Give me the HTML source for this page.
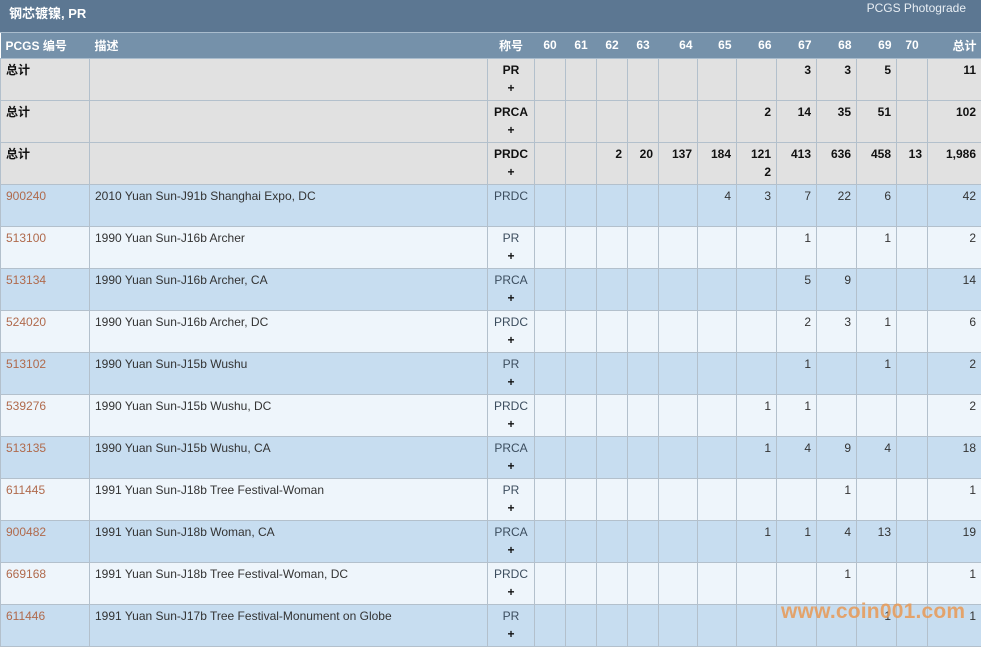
<!DOCTYPE html>
<html><head><meta charset="utf-8"><style>
*{margin:0;padding:0;box-sizing:border-box}
body{width:981px;height:640px;overflow:hidden;background:#fff;font-family:"Liberation Sans","Noto Sans CJK SC",sans-serif;font-size:12px;color:#333;position:relative}
.top{height:33px;background:#5c7792;position:relative;border-bottom:1px solid #a9bccd}
.top .t{position:absolute;left:9px;top:3px;color:#fff;font-weight:bold;font-size:13px}
.top .r{position:absolute;right:15px;top:1px;color:#e8eef4;font-size:12px}
table{border-collapse:collapse;table-layout:fixed;width:981px}
th{background:#7591aa;color:#fff;font-weight:bold;height:25px;font-size:12px;text-align:right;padding:0 5px 0 0;border-bottom:1px solid #a9bccd}
th.l{text-align:left;padding-left:5px}
th.c{text-align:center;padding:0}
td{height:42px;border:1px solid #b3c0cc;border-top:none;vertical-align:top;text-align:right;padding:2px 5px 0 0;line-height:18px}
td.l{text-align:left;padding-left:5px}
td.c{text-align:center;padding-right:0}
tr.s td{background:#e1e1e1;font-weight:bold;color:#111}
tr.b td{background:#c7ddf0}
tr.w td{background:#eef5fb}
td a{color:#b06a4c;text-decoration:none}
td.c{color:#3c4d5e}
tr.s td.c{color:#111}
b.p{color:#111}
.wm{position:absolute;left:781px;top:600px;color:#e89a55;font-weight:bold;font-size:21px;opacity:.85;font-family:"Liberation Sans",sans-serif;letter-spacing:0.2px}
</style></head><body>
<div class="top"><span class="t">钢芯镀镍, PR</span><span class="r">PCGS Photograde</span></div>
<table>
<colgroup><col style="width:89px"><col style="width:398px"><col style="width:47px"><col style="width:31px"><col style="width:31px"><col style="width:31px"><col style="width:31px"><col style="width:39px"><col style="width:39px"><col style="width:40px"><col style="width:40px"><col style="width:40px"><col style="width:40px"><col style="width:31px"><col style="width:54px"></colgroup>
<tr><th class="l">PCGS 编号</th><th class="l">描述</th><th class="c">称号</th><th class="c">60</th><th class="c">61</th><th class="c">62</th><th class="c">63</th><th>64</th><th>65</th><th>66</th><th>67</th><th>68</th><th>69</th><th class="c">70</th><th>总计</th></tr>
<tr class="s"><td class="l">总计</td><td></td><td class="c">PR<br>+</td><td></td><td></td><td></td><td></td><td></td><td></td><td></td><td>3</td><td>3</td><td>5</td><td></td><td>11</td></tr>
<tr class="s"><td class="l">总计</td><td></td><td class="c">PRCA<br>+</td><td></td><td></td><td></td><td></td><td></td><td></td><td>2</td><td>14</td><td>35</td><td>51</td><td></td><td>102</td></tr>
<tr class="s"><td class="l">总计</td><td></td><td class="c">PRDC<br>+</td><td></td><td></td><td>2</td><td>20</td><td>137</td><td>184</td><td>121<br>2</td><td>413</td><td>636</td><td>458</td><td>13</td><td>1,986</td></tr>
<tr class="b"><td class="l"><a>900240</a></td><td class="l">2010 Yuan Sun-J91b Shanghai Expo, DC</td><td class="c">PRDC</td><td></td><td></td><td></td><td></td><td></td><td>4</td><td>3</td><td>7</td><td>22</td><td>6</td><td></td><td>42</td></tr>
<tr class="w"><td class="l"><a>513100</a></td><td class="l">1990 Yuan Sun-J16b Archer</td><td class="c">PR<br><b class="p">+</b></td><td></td><td></td><td></td><td></td><td></td><td></td><td></td><td>1</td><td></td><td>1</td><td></td><td>2</td></tr>
<tr class="b"><td class="l"><a>513134</a></td><td class="l">1990 Yuan Sun-J16b Archer, CA</td><td class="c">PRCA<br><b class="p">+</b></td><td></td><td></td><td></td><td></td><td></td><td></td><td></td><td>5</td><td>9</td><td></td><td></td><td>14</td></tr>
<tr class="w"><td class="l"><a>524020</a></td><td class="l">1990 Yuan Sun-J16b Archer, DC</td><td class="c">PRDC<br><b class="p">+</b></td><td></td><td></td><td></td><td></td><td></td><td></td><td></td><td>2</td><td>3</td><td>1</td><td></td><td>6</td></tr>
<tr class="b"><td class="l"><a>513102</a></td><td class="l">1990 Yuan Sun-J15b Wushu</td><td class="c">PR<br><b class="p">+</b></td><td></td><td></td><td></td><td></td><td></td><td></td><td></td><td>1</td><td></td><td>1</td><td></td><td>2</td></tr>
<tr class="w"><td class="l"><a>539276</a></td><td class="l">1990 Yuan Sun-J15b Wushu, DC</td><td class="c">PRDC<br><b class="p">+</b></td><td></td><td></td><td></td><td></td><td></td><td></td><td>1</td><td>1</td><td></td><td></td><td></td><td>2</td></tr>
<tr class="b"><td class="l"><a>513135</a></td><td class="l">1990 Yuan Sun-J15b Wushu, CA</td><td class="c">PRCA<br><b class="p">+</b></td><td></td><td></td><td></td><td></td><td></td><td></td><td>1</td><td>4</td><td>9</td><td>4</td><td></td><td>18</td></tr>
<tr class="w"><td class="l"><a>611445</a></td><td class="l">1991 Yuan Sun-J18b Tree Festival-Woman</td><td class="c">PR<br><b class="p">+</b></td><td></td><td></td><td></td><td></td><td></td><td></td><td></td><td></td><td>1</td><td></td><td></td><td>1</td></tr>
<tr class="b"><td class="l"><a>900482</a></td><td class="l">1991 Yuan Sun-J18b Woman, CA</td><td class="c">PRCA<br><b class="p">+</b></td><td></td><td></td><td></td><td></td><td></td><td></td><td>1</td><td>1</td><td>4</td><td>13</td><td></td><td>19</td></tr>
<tr class="w"><td class="l"><a>669168</a></td><td class="l">1991 Yuan Sun-J18b Tree Festival-Woman, DC</td><td class="c">PRDC<br><b class="p">+</b></td><td></td><td></td><td></td><td></td><td></td><td></td><td></td><td></td><td>1</td><td></td><td></td><td>1</td></tr>
<tr class="b"><td class="l"><a>611446</a></td><td class="l">1991 Yuan Sun-J17b Tree Festival-Monument on Globe</td><td class="c">PR<br><b class="p">+</b></td><td></td><td></td><td></td><td></td><td></td><td></td><td></td><td></td><td></td><td>1</td><td></td><td>1</td></tr>
</table>
<div class="wm">www.coin001.com</div>
</body></html>
